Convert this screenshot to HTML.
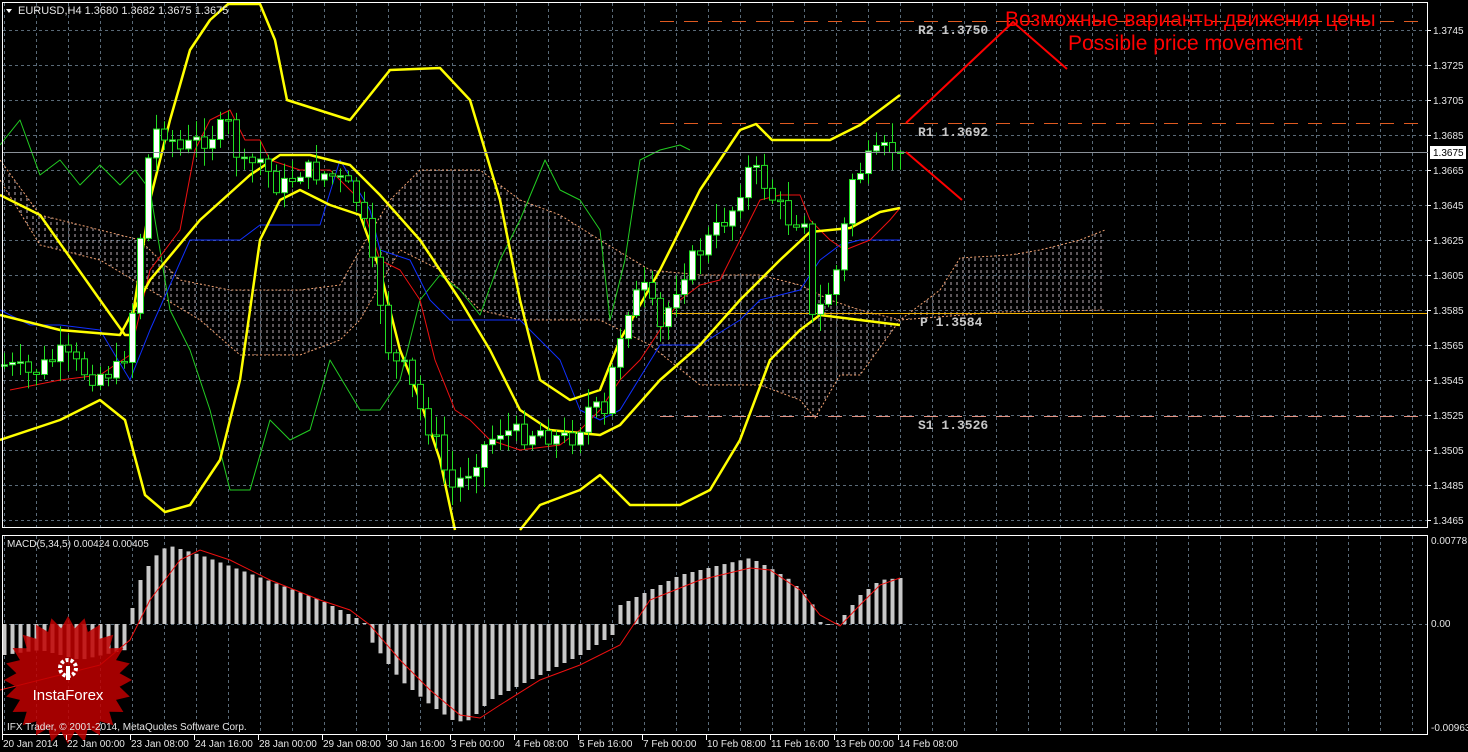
<!DOCTYPE html>
<html><head><meta charset="utf-8">
<style>
html,body{margin:0;padding:0;background:#000;}
body{width:1468px;height:752px;overflow:hidden;position:relative;font-family:"Liberation Sans",sans-serif;}
svg{position:absolute;left:0;top:0;}
.ax{fill:#e6e6e6;font-size:10px;font-family:"Liberation Sans",sans-serif;}
.lv{fill:#c8c8c8;font-size:13px;font-weight:bold;font-family:"Liberation Mono",monospace;}
</style></head><body>
<svg id="c" width="1468" height="752" xmlns="http://www.w3.org/2000/svg">
<defs>
<pattern id="hatch" width="6" height="6" patternUnits="userSpaceOnUse">
<line x1="3" y1="0" x2="3" y2="3" stroke="#e8d8e0" stroke-width="1"/>
</pattern>
</defs>
<rect x="0" y="0" width="1468" height="752" fill="#000"/>
<g id="grid"></g>
<g id="cloud"></g>
<g id="levels"></g>
<g id="lines"></g>
<g id="candles"></g>
<g id="macd"></g>
<rect x="2.5" y="2.5" width="1425" height="525" fill="none" stroke="#fff" stroke-width="1"/>
<rect x="2.5" y="535.5" width="1425" height="199" fill="none" stroke="#fff" stroke-width="1"/>
<line x1="3" y1="152.5" x2="1428" y2="152.5" stroke="#8a9098" stroke-width="1"/>
<rect x="1430" y="146" width="36" height="13" fill="#fff"/>
<text x="1433" y="156" class="ax" style="fill:#000">1.3675</text>
<polyline points="906,123 1013,22 1067,69" fill="none" stroke="#ff0000" stroke-width="2"/>
<line x1="906" y1="152" x2="962" y2="200" stroke="#ff0000" stroke-width="2"/>
<text x="1005" y="26" fill="#ff0000" font-size="21" font-family="Liberation Sans, sans-serif">Возможные варианты движения цены</text>
<text x="1068" y="50" fill="#ff0000" font-size="21" font-family="Liberation Sans, sans-serif">Possible price movement</text>
<text x="918" y="34" class="lv">R2 1.3750</text>
<text x="918" y="136" class="lv">R1 1.3692</text>
<text x="920" y="326" class="lv">P  1.3584</text>
<text x="918" y="429" class="lv">S1 1.3526</text>
<polygon points="6,9 12,9 9,13" fill="#fff"/>
<text x="18" y="14" class="ax" style="font-size:11px">EURUSD,H4  1.3680 1.3682 1.3675 1.3675</text>
<text x="7" y="547" class="ax">MACD(5,34,5) 0.00424 0.00405</text>
<g transform="translate(68,680)">
<polygon id="star" fill="#c00000" opacity="0.85"/>
<circle cx="0" cy="-12" r="8" fill="none" stroke="#fff" stroke-width="4" stroke-dasharray="3 2"/>
<rect x="-2" y="-14" width="4" height="14" fill="#fff"/>
<text x="0" y="20" text-anchor="middle" fill="#fff" font-size="15" font-family="Liberation Sans, sans-serif">InstaForex</text>
</g>
<text x="7" y="730" class="ax">IFX Trader, © 2001-2014, MetaQuotes Software Corp.</text>
<g id="axis"></g>
</svg>
<script>
(function(){
var NS="http://www.w3.org/2000/svg";
function el(p,t,a){var e=document.createElementNS(NS,t);for(var k in a)e.setAttribute(k,a[k]);document.getElementById(p).appendChild(e);return e;}
for(var x=4;x<1428;x+=32){el("grid","line",{x1:x+.5,y1:3,x2:x+.5,y2:527,stroke:"#5a6a78","stroke-dasharray":"3 3"});
el("grid","line",{x1:x+.5,y1:536,x2:x+.5,y2:734,stroke:"#5a6a78","stroke-dasharray":"3 3"});}
var p=1.3745;
for(var k=0;k<15;k++){var y=30+35*k;el("grid","line",{x1:3,y1:y+.5,x2:1428,y2:y+.5,stroke:"#5a6a78","stroke-dasharray":"3 3"});
var t=el("axis","text",{x:1433,y:y+4,"class":"ax"});t.textContent=(p-0.002*k).toFixed(4);
el("axis","line",{x1:1428,y1:y+.5,x2:1431,y2:y+.5,stroke:"#fff"});}
el("grid","line",{x1:3,y1:624.5,x2:1428,y2:624.5,stroke:"#5a6a78","stroke-dasharray":"3 3"});
[["0.00778",544],["0.00",627],["-0.00963",731]].forEach(function(a){var t=el("axis","text",{x:1431,y:a[1],"class":"ax"});t.textContent=a[0];});
var dl=["20 Jan 2014","22 Jan 00:00","23 Jan 08:00","24 Jan 16:00","28 Jan 00:00","29 Jan 08:00","30 Jan 16:00","3 Feb 00:00","4 Feb 08:00","5 Feb 16:00","7 Feb 00:00","10 Feb 08:00","11 Feb 16:00","13 Feb 00:00","14 Feb 08:00"];
dl.forEach(function(s,i){var x=2+64*i;var t=el("axis","text",{x:x+1,y:747,"class":"ax"});t.textContent=s;el("axis","line",{x1:x+.5,y1:735,x2:x+.5,y2:740,stroke:"#fff"});});
var up=[[0,160],[40,215],[100,230],[140,240],[180,280],[230,290],[300,290],[340,285],[360,250],[390,200],[420,170],[480,170],[520,200],[560,215],[600,240],[650,270],[700,275],[760,275],[800,285],[830,300],[860,310],[900,320],[940,290],[960,258],[1010,255],[1040,250],[1080,240],[1105,230]];
var lo=[[0,180],[40,245],[100,260],[150,290],[200,320],[240,355],[300,355],[340,340],[360,320],[400,250],[440,270],[480,310],[520,320],[600,320],[650,345],[700,385],[760,385],[800,400],[815,418],[840,375],[860,375],[900,320],[1000,312],[1105,310]];
function pts(a){return a.map(function(q){return q.join(",")}).join(" ");}
el("cloud","polygon",{points:pts(up)+" "+pts(lo.slice().reverse()),fill:"url(#hatch)",opacity:"0.8"});
el("cloud","polyline",{points:pts(up),fill:"none",stroke:"#f0a070","stroke-dasharray":"2 2"});
el("cloud","polyline",{points:pts(lo),fill:"none",stroke:"#f0a070","stroke-dasharray":"2 2"});
el("levels","line",{x1:660,y1:21.5,x2:1428,y2:21.5,stroke:"#e05a20","stroke-dasharray":"14 10"});
el("levels","line",{x1:660,y1:123.5,x2:1428,y2:123.5,stroke:"#e05a20","stroke-dasharray":"14 10"});
el("levels","line",{x1:660,y1:313.5,x2:1428,y2:313.5,stroke:"#f0b000"});
el("levels","line",{x1:660,y1:416.5,x2:1428,y2:416.5,stroke:"#e09080","stroke-dasharray":"14 10"});
function line(a,c,w){el("lines","polyline",{points:pts(a),fill:"none",stroke:c,"stroke-width":w,"stroke-linejoin":"round"});}
line([[0,145],[20,120],[40,175],[60,160],[80,185],[100,165],[120,185],[135,170],[150,190],[170,310],[190,350],[210,410],[230,490],[250,490],[270,420],[290,440],[310,430],[330,360],[360,410],[380,410],[400,380],[420,300],[440,275],[460,290],[480,315],[500,260],[520,220],[545,160],[560,190],[580,200],[600,230],[610,320],[625,260],[640,160],[660,150],[680,145],[690,150]],"#22cc22",1);
line([[0,310],[30,325],[60,325],[100,330],[130,380],[150,330],[190,240],[240,240],[260,225],[320,225],[340,160],[370,210],[380,250],[410,260],[430,300],[450,320],[495,320],[520,320],[560,360],[580,410],[600,420],[620,410],[660,345],[700,345],[740,320],[760,300],[780,295],[800,290],[820,260],[840,245],[860,240],[900,240]],"#1030ff",1);
line([[10,390],[60,380],[100,375],[130,355],[150,270],[180,230],[195,150],[210,120],[230,110],[245,140],[260,140],[270,160],[300,170],[330,170],[360,200],[380,260],[400,270],[420,300],[435,360],[455,410],[470,420],[490,440],[520,450],[560,445],[580,430],[600,410],[620,380],[640,360],[680,300],[700,285],[720,280],[740,240],[760,200],[780,195],[800,195],[810,220],[830,240],[845,250],[870,240],[890,220],[900,208]],"#ee1010",1);
line([[0,195],[40,215],[100,300],[125,335],[130,335],[150,200],[170,120],[190,50],[210,20],[228,4],[260,4],[275,40],[287,100],[350,120],[390,70],[440,68],[470,100],[500,200],[520,300],[540,380],[570,400],[600,390],[620,340],[660,270],[700,190],[740,130],[756,124],[772,140],[830,140],[860,125],[900,95]],"#ffff00",2.5);
line([[0,315],[60,330],[120,335],[150,280],[200,220],[250,175],[280,155],[310,155],[350,165],[380,195],[420,240],[460,300],[490,350],[520,410],[550,430],[600,435],[620,425],[660,380],[700,345],[740,300],[780,260],[810,232],[850,228],[880,212],[900,208]],"#ffff00",2.5);
line([[0,440],[60,420],[100,400],[125,420],[145,495],[165,512],[190,505],[220,460],[240,380],[260,240],[280,200],[300,190],[330,205],[360,215],[380,270],[400,350],[420,400],[440,460],[455,530]],"#ffff00",2.5);
line([[520,530],[540,505],[580,490],[600,475],[615,490],[630,505],[680,505],[710,490],[740,440],[770,360],[800,330],[820,315],[860,320],[900,325]],"#ffff00",2.5);
var key=[[4,365],[30,375],[60,355],[90,375],[120,370],[130,330],[150,140],[160,125],[180,150],[200,140],[230,125],[240,170],[260,160],[280,190],[300,170],[330,175],[345,185],[360,205],[370,260],[380,300],[390,360],[405,370],[420,410],[435,440],[450,490],[465,475],[480,450],[500,430],[520,435],[540,430],[560,440],[575,435],[590,405],[605,420],[615,350],[630,300],[645,290],[660,330],[680,275],[700,250],[720,225],[735,205],[745,170],[760,175],[770,195],[790,222],[805,215],[812,320],[825,300],[840,260],[850,180],[870,160],[890,148],[900,152]];
function interp(x){for(var i=1;i<key.length;i++){if(x<=key[i][0]){var a=key[i-1],b=key[i];return a[1]+(b[1]-a[1])*(x-a[0])/(b[0]-a[0]);}}return 152;}
var seed=7;function rnd(){seed=(seed*9301+49297)%233280;return seed/233280;}
var prev=interp(4);
for(var x=4;x<=900;x+=8){var c=interp(x)+(rnd()-0.5)*22;if(x==900)c=152;var o=prev;
var tp=Math.min(o,c),bt=Math.max(o,c);var hi=tp-rnd()*18-2,lw=bt+rnd()*18+2;
el("candles","line",{x1:x+.5,y1:hi,x2:x+.5,y2:lw,stroke:"#22dd22"});
var h=Math.max(bt-tp,1.5);
el("candles","rect",{x:x-2.5,y:tp,width:6,height:h,fill:(c<o?"#fff":"#000"),stroke:"#22dd22","stroke-width":1});
prev=c;}
var mk=[[4,655],[40,650],[80,660],[125,650],[135,590],[145,570],[160,550],[170,546],[200,555],[240,570],[280,585],[320,600],[360,620],[368,626],[370,640],[400,680],[430,705],[455,722],[470,720],[490,700],[520,685],[550,670],[580,655],[612,635],[620,605],[640,595],[680,575],[720,565],[750,558],[770,568],[790,580],[810,600],[820,622],[832,626],[840,620],[860,595],[880,580],[900,578]];
function mi(x){for(var i=1;i<mk.length;i++){if(x<=mk[i][0]){var a=mk[i-1],b=mk[i];return a[1]+(b[1]-a[1])*(x-a[0])/(b[0]-a[0]);}}return 578;}
for(var x=4;x<=900;x+=8){var v=mi(x);var t1=Math.min(v,624),b1=Math.max(v,624);
el("macd","rect",{x:x-1.5,y:t1,width:4,height:Math.max(b1-t1,1),fill:"#c8c8c8"});}
el("macd","polyline",{points:pts([[0,690],[40,680],[100,665],[130,640],[150,600],[180,560],[200,550],[230,560],[270,580],[320,600],[350,610],[370,625],[400,660],[430,690],[460,715],[480,718],[500,705],[540,680],[580,665],[620,645],[650,600],[700,580],[750,568],[770,570],[800,590],[820,615],[840,626],[860,605],[880,585],[900,578]]),fill:"none",stroke:"#ee1010","stroke-width":1});
var s=[];for(var i=0;i<48;i++){var r=i%2?52:64;var a=i*Math.PI/24;s.push((r*Math.cos(a)).toFixed(1)+","+(r*Math.sin(a)).toFixed(1));}
document.getElementById("star").setAttribute("points",s.join(" "));
})();
</script>
</body></html>
